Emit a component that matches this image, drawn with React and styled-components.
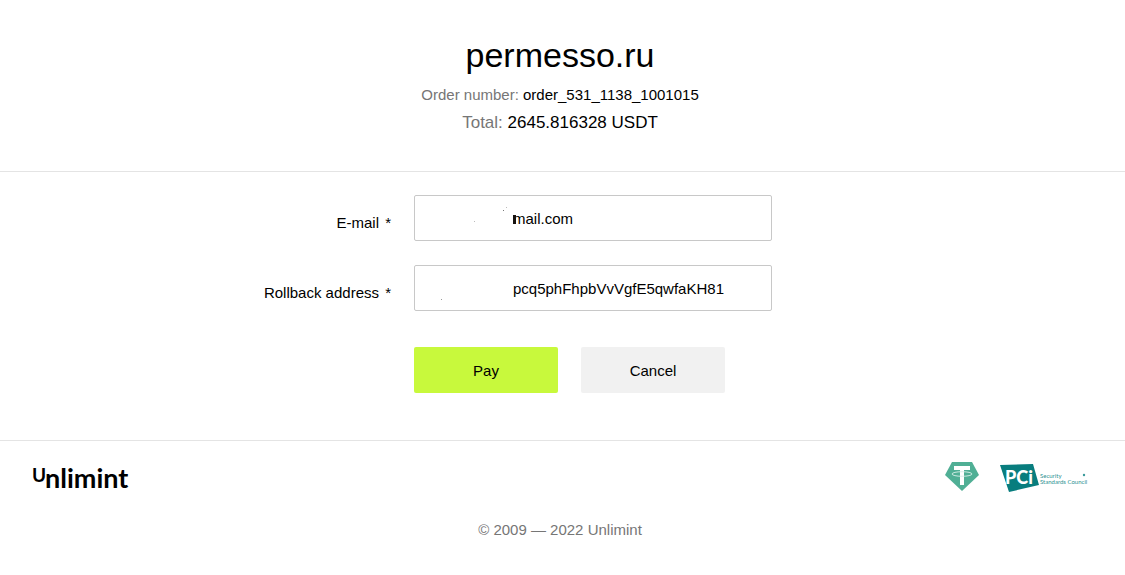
import React from "react";
import styled, { createGlobalStyle } from "styled-components";

const GlobalStyle = createGlobalStyle`
  * { box-sizing: border-box; }
  body {
    margin: 0;
    background: #fff;
    color: #000;
    font: 15px/20px "Liberation Sans", Arial, sans-serif;
  }
`;

const Header = styled.header`
  padding: 31px 5px 36px 0;
  border-bottom: 1px solid #e4e4e4;
  text-align: center;
`;

const Merchant = styled.h1`
  margin: 0;
  font-size: 34px;
  line-height: 48px;
  font-weight: 400;
`;

const Detail = styled.p`
  margin: 0;
  padding-top: 4px;
  font-size: ${(p) => (p.$large ? "17px" : "15px")};
  line-height: 24px;
`;

const Muted = styled.span`
  color: #767676;
`;

const Form = styled.form`
  display: flex;
  flex-direction: column;
  gap: 24px;
  padding: 23px 5px 47px 0;
  border-bottom: 1px solid #e4e4e4;
`;

const Row = styled.div`
  display: grid;
  grid-template-columns: 35% minmax(0, 358px);
  column-gap: 22px;
`;

const Label = styled.label`
  padding: 18px 1px 8px 0;
  text-align: right;
`;

const Required = styled.span`
  margin-left: 2px;
`;

const Field = styled.div`
  position: relative;
`;

const Input = styled.input`
  display: block;
  width: 100%;
  height: 46px;
  padding: 0 12px 0 98px;
  border: 1px solid #c8c8c8;
  border-radius: 2px;
  background: #fff;
  color: #000;
  font: inherit;
`;

const Specks = styled.svg`
  position: absolute;
  inset: 0 auto auto 0;
  pointer-events: none;
`;

const Actions = styled.div`
  display: flex;
  gap: 23px;
  grid-column: 2;
  padding-top: 12px;
`;

const Button = styled.button`
  width: 144px;
  height: 46px;
  padding: 2px 0 0;
  border: 0;
  border-radius: 2px;
  background: ${(p) => (p.$primary ? "#c8f93c" : "#f1f1f1")};
  color: #000;
  font: inherit;
  cursor: pointer;
`;

const Footer = styled.footer`
  padding: 20px 5px 35px 0;
`;

const Brands = styled.div`
  display: flex;
  justify-content: space-between;
  align-items: center;
  padding: 0 32px;
`;

const Badges = styled.div`
  display: flex;
  align-items: center;
  gap: 20px;
`;

const Copyright = styled.p`
  margin: 27px 0 0;
  text-align: center;
  color: #767676;
`;

function UnlimintLogo() {
  return (
    <svg width="102" height="32" viewBox="0 0 102 32" role="img" aria-label="Unlimint">
      <g fontFamily="Lato, sans-serif" fontWeight="700" fill="#000">
        <text x="0" y="21" fontSize="19">U</text>
        <text x="13" y="27" fontSize="27">nlimint</text>
      </g>
    </svg>
  );
}

function TetherLogo() {
  return (
    <svg width="34" height="32" viewBox="0 0 34 32" role="img" aria-label="Tether">
      <path d="M7 1H27L34 14L17 30L0 14Z" fill="#50af95" />
      <path d="M9 5H25V9H19V24H15V9H9Z" fill="#fff" />
      <ellipse cx="17" cy="13" rx="10" ry="2.3" fill="none" stroke="#d9efe9" strokeWidth="0.9" />
    </svg>
  );
}

function PciLogo() {
  return (
    <svg width="89" height="32" viewBox="0 0 89 32" role="img" aria-label="PCI Security Standards Council">
      <path d="M1 4L34 3L40 24L10 31Z" fill="#087d7e" />
      <text x="6" y="23" fontFamily="Lato, sans-serif" fontWeight="900" fontSize="18" fill="#fff">PCi</text>
      <g fontFamily="Lato, sans-serif" fontSize="6" fill="#2d9293">
        <text x="41" y="17">Security</text>
        <text x="41" y="23">Standards Council</text>
      </g>
      <circle cx="85" cy="14" r="1.2" fill="#3a9a9b" />
    </svg>
  );
}

export default function App() {
  return (
    <>
      <GlobalStyle />
      <Header>
        <Merchant>permesso.ru</Merchant>
        <Detail><Muted>Order number:</Muted> order_531_1138_1001015</Detail>
        <Detail $large><Muted>Total:</Muted> 2645.816328 USDT</Detail>
      </Header>
      <main>
        <Form onSubmit={(e) => e.preventDefault()}>
          <Row>
            <Label htmlFor="email">E-mail <Required>*</Required></Label>
            <Field>
              <Input id="email" type="text" defaultValue="mail.com" />
              <Specks width="110" height="46" aria-hidden="true">
                <path d="M99 20h3v9h-3z" fill="#171310" />
                <path d="M89 15h1v1h-1z" fill="#777" />
                <path d="M92 12h1v1h-1zM60 26h1v1h-1z" fill="#bbb" />
              </Specks>
            </Field>
          </Row>
          <Row>
            <Label htmlFor="rollback">Rollback address <Required>*</Required></Label>
            <Field>
              <Input id="rollback" type="text" defaultValue="pcq5phFhpbVvVgfE5qwfaKH81" />
              <Specks width="110" height="46" aria-hidden="true">
                <path d="M27 34h1v1h-1z" fill="#999" />
              </Specks>
            </Field>
          </Row>
          <Row>
            <Actions>
              <Button type="submit" $primary>Pay</Button>
              <Button type="button">Cancel</Button>
            </Actions>
          </Row>
        </Form>
      </main>
      <Footer>
        <Brands>
          <UnlimintLogo />
          <Badges>
            <TetherLogo />
            <PciLogo />
          </Badges>
        </Brands>
        <Copyright>© 2009 — 2022 Unlimint</Copyright>
      </Footer>
    </>
  );
}
